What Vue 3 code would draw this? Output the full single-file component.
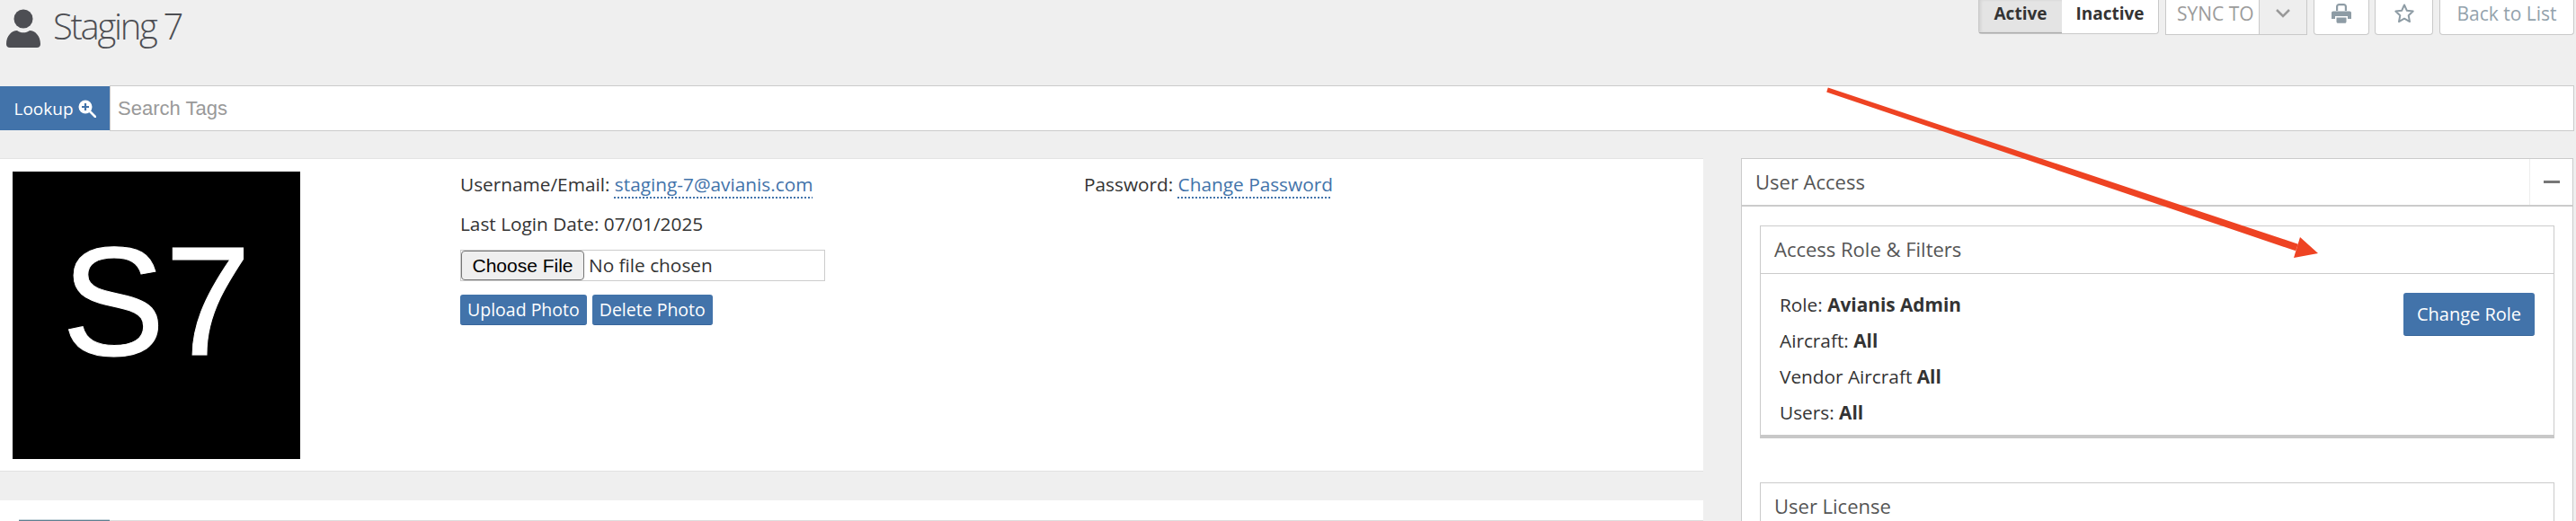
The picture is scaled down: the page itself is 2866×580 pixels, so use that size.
<template>
  <div class="page">
    <header class="top">
      <div class="title">
        <svg class="user-icon" viewBox="0 0 38 43" width="38" height="43">
          <circle cx="19" cy="11" r="10.500" fill="#4d4e53" />
          <path d="M0 39c0-9 6-15 12-15 2 1.500 4.500 2.300 7 2.300s5-.8 7-2.300c6 0 12 6 12 15 0 2.500-1.500 4-4 4H4c-2.500 0-4-1.500-4-4z" fill="#4d4e53" />
        </svg>
        <h1>Staging 7</h1>
      </div>
      <div class="actions">
        <div class="toggle">
          <button class="on">Active</button>
          <button>Inactive</button>
        </div>
        <div class="sync">
          <span class="sync-label">SYNC TO</span>
          <span class="sync-arrow">
            <svg viewBox="0 0 18 12" width="18" height="12"><path d="M2 2l7 7 7-7" fill="none" stroke="#999" stroke-width="2.500" /></svg>
          </span>
        </div>
        <button class="tool print">
          <svg viewBox="0 0 24 24" width="24" height="24">
            <path d="M6 9V4.500C6 2.500 7.500 1 9.500 1h5C16.500 1 18 2.500 18 4.500V9h-2.200V4.500c0-.8-.5-1.300-1.300-1.300h-5c-.8 0-1.300.5-1.300 1.300V9z" fill="#8e9ca5" />
            <path d="M3 9.500h18c1.300 0 2 .8 2 2V18h-4v-3H5v3H1v-6.500c0-1.200.7-2 2-2z" fill="#8e9ca5" />
            <path d="M6.500 16.500h11V21c0 1-.6 1.800-1.800 1.800H8.300c-1.200 0-1.800-.8-1.800-1.800z" fill="#8e9ca5" />
          </svg>
        </button>
        <button class="tool star">
          <svg viewBox="0 0 24 24" width="24" height="24">
            <path d="M12 2.500l2.900 6.300 6.800.8-5 4.700 1.300 6.800-6-3.400-6 3.400 1.300-6.800-5-4.700 6.800-.8z" fill="none" stroke="#8e9ca5" stroke-width="2" stroke-linejoin="round" />
          </svg>
        </button>
        <button class="tool back">Back to List</button>
      </div>
    </header>

    <div class="lookup">
      <button class="lookup-btn">
        Lookup
        <svg viewBox="0 0 20 20" width="20" height="20">
          <circle cx="8" cy="8" r="7.500" fill="#fff" />
          <path d="M13 13l6 6" stroke="#fff" stroke-width="2.500" stroke-linecap="round" />
          <path d="M8 4v8M4 8h8" stroke="#4273aa" stroke-width="2.200" />
        </svg>
      </button>
      <input class="lookup-input" placeholder="Search Tags" />
    </div>

    <div class="columns">
      <div class="left">
        <section class="profile">
          <div class="avatar"><span>S7</span></div>
          <div class="details">
            <div class="detail-main">
              <p>Username/Email: <a>staging-7@avianis.com</a></p>
              <p>Last Login Date: 07/01/2025</p>
              <input class="file" type="file" />
              <div class="photo-btns">
                <button class="btn">Upload Photo</button>
                <button class="btn">Delete Photo</button>
              </div>
            </div>
            <p class="password">Password: <a>Change Password</a></p>
          </div>
        </section>
        <section class="tabs">
          <div class="tab"></div>
          <div class="tab-line"></div>
        </section>
      </div>

      <aside class="right">
        <div class="panel-head">
          <span>User Access</span>
          <span class="collapse"><i></i></span>
        </div>
        <div class="panel-body">
          <div class="card">
            <div class="card-head">Access Role &amp; Filters</div>
            <div class="card-body">
              <div class="rows">
                <p v-for="row in rows" :key="row.label">{{ row.label }} <b>{{ row.value }}</b></p>
              </div>
              <button class="btn role">Change Role</button>
            </div>
          </div>
          <div class="card license">
            <div class="card-head">User License</div>
          </div>
        </div>
      </aside>
    </div>

    <svg class="arrow" viewBox="0 0 2866 580" width="2866" height="580">
      <path d="M2032.200 102.400L2033.800 97.600L2556.800 271.700L2554.200 279.300z" fill="#ee4323" />
      <path d="M2579 282L2552 287L2559 264z" fill="#ee4323" />
    </svg>
  </div>
</template>

<script setup>
const rows = [
  { label: 'Role:', value: 'Avianis Admin' },
  { label: 'Aircraft:', value: 'All' },
  { label: 'Vendor Aircraft', value: 'All' },
  { label: 'Users:', value: 'All' }
]
</script>

<style>
html, body {
  margin: 0;
  background: #efefef;
  overflow: hidden;
}
</style>

<style scoped>
.page {
  position: relative;
  width: 2866px;
  height: 580px;
  overflow: hidden;
  background: #efefef;
  font-family: "Open Sans", sans-serif;
  font-size: 20.800px;
  color: #333;
}
p {
  margin: 0;
}
button {
  font-family: inherit;
}
.top {
  display: flex;
  justify-content: space-between;
  height: 95px;
  padding-right: 2px;
  box-sizing: border-box;
}
.title {
  display: flex;
  align-items: flex-start;
  gap: 14px;
  padding: 10px 0 0 7px;
}
.title h1 {
  margin: -3px 0 0;
  font-size: 40px;
  font-weight: 300;
  line-height: 44px;
  letter-spacing: -2.300px;
  color: #4d4e53;
}
.actions {
  display: flex;
  align-items: flex-start;
  gap: 7px;
}
.toggle {
  display: flex;
  height: 38px;
  box-sizing: border-box;
  border: 1px solid #c9c9c9;
  border-top: 0;
  border-radius: 0 0 4px 4px;
  background: #fff;
}
.toggle button {
  border: 0;
  background: none;
  font-size: 19px;
  font-weight: 700;
  color: #333;
  padding: 0 0 7px;
  width: 107px;
}
.toggle .on {
  width: 92px;
  background: #e4e4e4;
  box-shadow: inset 2px 0 3px rgba(0, 0, 0, .08);
  border-bottom: 1px solid #aaa;
}
.sync {
  display: flex;
  height: 39px;
  box-sizing: border-box;
  border: 1px solid #c9c9c9;
  border-top: 0;
  background: #fff;
}
.sync-label {
  width: 103px;
  line-height: 31px;
  padding-left: 12px;
  box-sizing: border-box;
  font-size: 21px;
  color: #9b9b9b;
  white-space: nowrap;
}
.sync-arrow {
  width: 53px;
  box-sizing: border-box;
  padding-bottom: 8px;
  display: flex;
  align-items: center;
  justify-content: center;
  background: #eee;
  border-left: 1px solid #c9c9c9;
}
.tool {
  height: 39px;
  box-sizing: border-box;
  padding: 0 0 8px;
  border: 1px solid #c9c9c9;
  border-top: 0;
  border-radius: 0 0 4px 4px;
  background: #fff;
  display: flex;
  align-items: center;
  justify-content: center;
}
.print {
  width: 62px;
  margin-right: -1px;
}
.star {
  width: 65px;
}
.back {
  width: 150px;
  font-size: 21px;
  color: #93a2ac;
}
.lookup {
  display: flex;
  height: 51px;
  margin-right: 2px;
  box-sizing: border-box;
}
.lookup-btn {
  width: 122px;
  margin: 1px 0;
  border: 0;
  padding: 0;
  background: #4273aa;
  color: #fff;
  font-size: 19px;
  display: flex;
  align-items: center;
  justify-content: center;
  gap: 5px;
}
.lookup-input {
  flex: 1;
  border: 1px solid #cbcbcb;
  padding: 0 8px;
  font-family: "Liberation Sans", sans-serif;
  font-size: 22px;
  outline: 0;
}
.lookup-input::placeholder {
  color: #999;
}
.columns {
  display: grid;
  grid-template-columns: 1895px 926px;
  column-gap: 42px;
  margin-top: 30px;
}
.profile {
  display: flex;
  height: 349px;
  box-sizing: border-box;
  padding: 14px 0 0 14px;
  background: #fff;
  border-top: 1px solid #e4e4e4;
  border-bottom: 1px solid #e2e2e2;
}
.avatar {
  width: 320px;
  height: 320px;
  padding-bottom: 32px;
  box-sizing: border-box;
  background: #000;
  display: flex;
  align-items: center;
  justify-content: center;
}
.avatar span {
  font-family: "Liberation Sans", sans-serif;
  font-size: 172px;
  line-height: 1;
  color: #fff;
  -webkit-text-stroke: 1px #fff;
}
.details {
  display: flex;
  margin-top: -1px;
  padding: 0 0 0 178px;
}
.detail-main {
  width: 694px;
}
.detail-main p {
  line-height: 30px;
  margin-bottom: 14px;
}
a {
  color: #4273aa;
  text-decoration: underline dotted 2px;
  text-underline-offset: 6px;
}
.file {
  display: block;
  width: 406px;
  height: 35px;
  box-sizing: border-box;
  border: 1px solid #ccc;
  background: #fff;
  font-family: "Open Sans", sans-serif;
  font-size: 20.800px;
}
.file::file-selector-button {
  width: 137px;
  height: 33px;
  margin: 0 5px 0 0;
  padding: 0;
  border: 1px solid #767676;
  border-radius: 4px;
  background: #efefef;
  color: #000;
  font-family: "Liberation Sans", sans-serif;
  font-size: 21px;
}
.photo-btns {
  display: flex;
  gap: 6px;
  margin-top: 15px;
}
.btn {
  height: 34px;
  padding: 0 8px;
  border: 0;
  border-radius: 3px;
  background: #4273aa;
  border-bottom: 1px solid #38659a;
  color: #fff;
  font-size: 19.500px;
}
.password {
  line-height: 30px;
  white-space: nowrap;
}
.tabs {
  display: flex;
  height: 60px;
  margin-top: 32px;
  padding: 21px 0 0 21px;
  box-sizing: border-box;
  background: #fff;
}
.tab {
  width: 101px;
  height: 20px;
  background: #5f8090;
  border-top: 1px solid #c9d6dc;
  box-sizing: border-box;
}
.tab-line {
  flex: 1;
  height: 1px;
  margin-top: 1px;
  background: #ddd;
}
.right {
  height: 420px;
  background: #fff;
  border: 1px solid #cbcbcb;
  border-bottom: 0;
  box-sizing: border-box;
}
.panel-head {
  display: flex;
  justify-content: space-between;
  height: 53px;
  box-sizing: border-box;
  padding-left: 15px;
  border-bottom: 2px solid #cbcbcb;
  line-height: 50px;
  font-size: 22px;
  color: #555;
}
.collapse {
  width: 47px;
  display: flex;
  align-items: center;
  justify-content: center;
  border-left: 1px solid #eee;
}
.collapse i {
  width: 18px;
  height: 3px;
  background: #777;
}
.panel-body {
  padding: 21px 20px 0;
}
.card {
  border: 1px solid #cbcbcb;
  border-bottom: 4px solid #c8c8c8;
}
.card-head {
  height: 53px;
  box-sizing: border-box;
  padding-left: 15px;
  border-bottom: 1px solid #cbcbcb;
  line-height: 50px;
  font-size: 22px;
  color: #555;
}
.card-body {
  display: flex;
  justify-content: space-between;
  align-items: flex-start;
  height: 179px;
  box-sizing: border-box;
  padding: 14px 21px 0 21px;
}
.rows p {
  line-height: 40px;
  white-space: nowrap;
}
.role {
  height: 48px;
  width: 146px;
  padding: 0;
  margin-top: 7px;
  font-size: 20px;
}
.license {
  margin-top: 49px;
  border-bottom: 0;
}
.license .card-head {
  border-bottom: 0;
}
.arrow {
  position: absolute;
  left: 0;
  top: 0;
  pointer-events: none;
}
</style>
